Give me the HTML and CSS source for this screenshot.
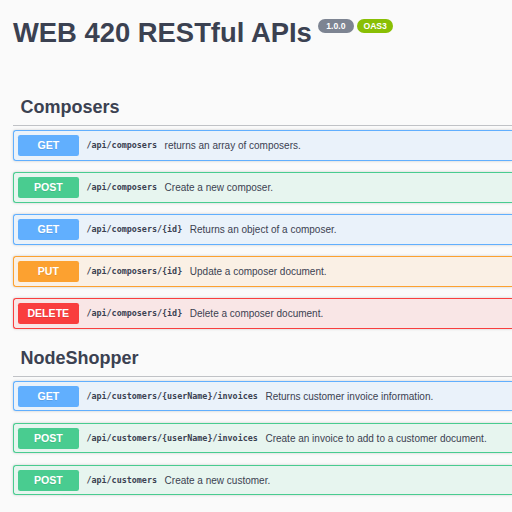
FILE: index.html
```html
<!DOCTYPE html>
<html lang="en">
<head>
<meta charset="utf-8">
<title>WEB 420 RESTful APIs</title>
<link rel="stylesheet" href="styles.css">
</head>
<body>
<div class="page">
  <div class="info">
    <h2 class="title"><span class="title-text">WEB 420 RESTful APIs</span><span class="badges"><small class="badge ver">1.0.0</small><small class="badge oas">OAS3</small></span></h2>
  </div>

  <section class="tag">
    <h3 class="tag-title">Composers</h3>
    <div class="op get"><span class="method">GET</span><span class="path">/api/composers</span><span class="desc">returns an array of composers.</span></div>
    <div class="op post"><span class="method">POST</span><span class="path">/api/composers</span><span class="desc">Create a new composer.</span></div>
    <div class="op get"><span class="method">GET</span><span class="path">/api/composers/{id}</span><span class="desc">Returns an object of a composer.</span></div>
    <div class="op put"><span class="method">PUT</span><span class="path">/api/composers/{id}</span><span class="desc">Update a composer document.</span></div>
    <div class="op delete"><span class="method">DELETE</span><span class="path">/api/composers/{id}</span><span class="desc">Delete a composer document.</span></div>
  </section>

  <section class="tag">
    <h3 class="tag-title">NodeShopper</h3>
    <div class="op get"><span class="method">GET</span><span class="path">/api/customers/{userName}/invoices</span><span class="desc">Returns customer invoice information.</span></div>
    <div class="op post"><span class="method">POST</span><span class="path">/api/customers/{userName}/invoices</span><span class="desc">Create an invoice to add to a customer document.</span></div>
    <div class="op post"><span class="method">POST</span><span class="path">/api/customers</span><span class="desc">Create a new customer.</span></div>
  </section>
</div>
</body>
</html>
```

FILE: styles.css
```css
html, body {
  margin: 0;
  padding: 0;
  overflow: hidden;
  background: #fafafa;
}

body {
  font-family: "Liberation Sans", Arial, sans-serif;
  color: #3b4151;
}

.page {
  padding: 0 0 0 13px;
}

.info {
  padding-top: 18px;
  margin-bottom: 41px;
}

.title {
  margin: 0;
  display: flex;
  align-items: flex-start;
  font-size: 27.4px;
  font-weight: 700;
  line-height: 30px;
  color: #3b4151;
}

.badges {
  display: flex;
  gap: 3px;
  margin-left: 6px;
  margin-top: 0.5px;
}

.badge {
  display: block;
  height: 14px;
  line-height: 14px;
  font-size: 8.6px;
  font-weight: 700;
  color: #fff;
  border-radius: 57px;
}

.ver {
  background: #7d8492;
  padding: 0 8.5px;
}

.oas {
  background: #89bf04;
  padding: 0 6.5px;
}

.tag + .tag {
  margin-top: 3px;
}

.tag-title {
  margin: 0 0 3.8px;
  padding: 7.6px 15px 7.6px 7.6px;
  font-size: 18px;
  font-weight: 700;
  line-height: normal;
  border-bottom: 1px solid rgba(59, 65, 81, 0.3);
}

.op {
  display: flex;
  align-items: center;
  margin: 0 0 11.4px;
  padding: 3.8px;
  border: 1px solid;
  border-right-width: 0;
  border-radius: 3px 0 0 3px;
  box-shadow: 0 0 3px rgba(0, 0, 0, 0.19);
  white-space: nowrap;
  overflow: hidden;
}

.method {
  min-width: 61px;
  padding: 4.5px 0;
  line-height: 12px;
  font-size: 10.6px;
  font-weight: 700;
  text-align: center;
  color: #fff;
  border-radius: 2.3px;
  text-shadow: 0 1px 0 rgba(0, 0, 0, 0.1);
}

.path {
  padding: 0 7.6px;
  font-family: "DejaVu Sans Mono", "Liberation Mono", monospace;
  font-size: 8.4px;
  font-weight: 700;
  color: #3b4151;
}

.desc {
  font-size: 10px;
  color: #3b4151;
}

.get { background: rgba(97, 175, 254, 0.1); border-color: #61affe; }
.get .method { background: #61affe; }

.post { background: rgba(73, 204, 144, 0.1); border-color: #49cc90; }
.post .method { background: #49cc90; }

.put { background: rgba(252, 161, 48, 0.1); border-color: #fca130; }
.put .method { background: #fca130; }

.delete { background: rgba(249, 62, 62, 0.1); border-color: #f93e3e; }
.delete .method { background: #f93e3e; }
```
